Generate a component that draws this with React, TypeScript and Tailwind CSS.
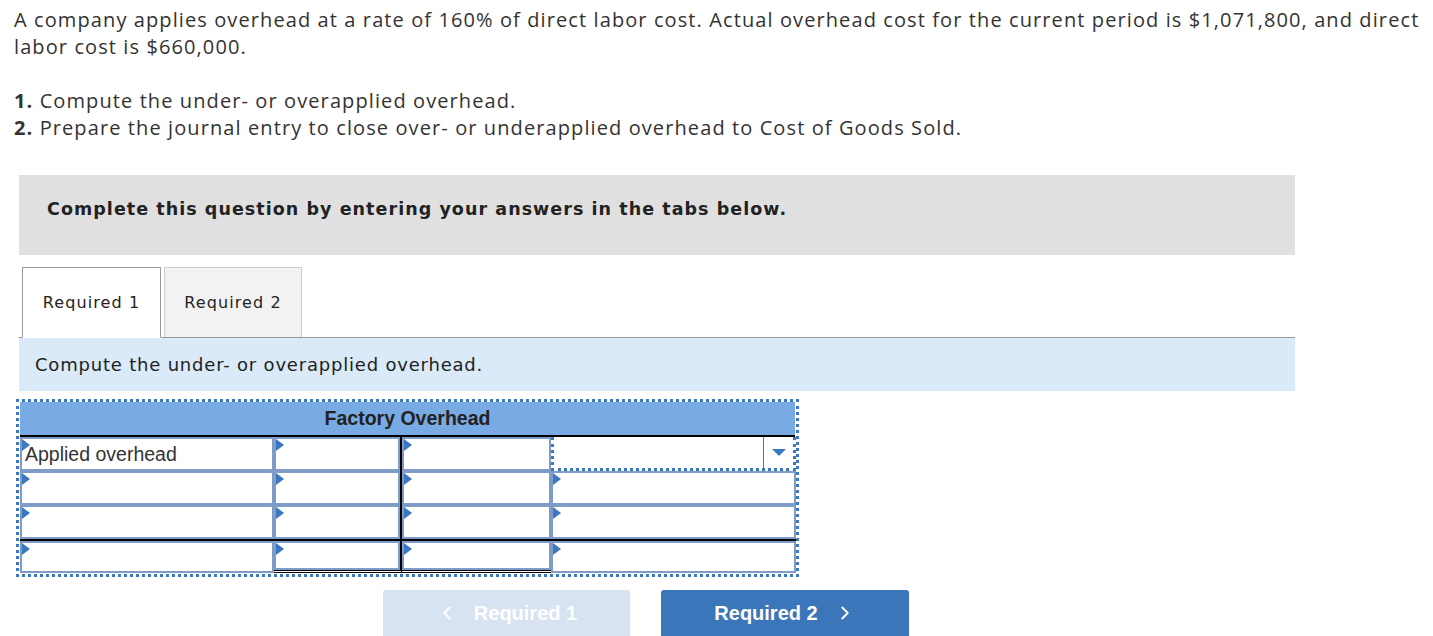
import { ChevronLeft, ChevronRight } from 'lucide-react'

function Flag() {
  return (
    <span className="absolute left-0 top-0 w-0 h-0 border-y-[6px] border-y-transparent border-l-[8px] border-l-[#3b78c0]" />
  )
}

function Cell({ text, className = '' }: { text?: string; className?: string }) {
  return (
    <div className={`relative h-full border-2 border-[#7f9cc8] bg-white ${className}`}>
      <Flag />
      {text && (
        <span className="absolute left-[3px] top-[2px] text-[19.5px] leading-[26px] text-[#333] font-['Liberation_Sans',sans-serif]">
          {text}
        </span>
      )}
    </div>
  )
}

const ROWS = [0, 1, 2, 3]

export default function App() {
  return (
    <div className="w-[1433px] h-[636px] overflow-hidden bg-white text-[#333] font-['Open_Sans',sans-serif]">
      {/* Aufgabentext */}
      <div className="pl-[14px] pt-[6px] text-[20px] leading-[27px] tracking-[1.1px]">
        <p>
          A company applies overhead at a rate of 160% of direct labor cost. Actual overhead cost for the current period is $1,071,800, and direct
          labor cost is $660,000.
        </p>
        <p className="mt-[27px]">
          <b>1.</b> Compute the under- or overapplied overhead.
        </p>
        <p>
          <b>2.</b> Prepare the journal entry to close over- or underapplied overhead to Cost of Goods Sold.
        </p>
      </div>

      {/* Hinweisbox */}
      <div className="ml-[19px] mt-[34px] w-[1276px] h-[80px] bg-[#e0e0e0] pt-[22px] pl-[28px] font-['DejaVu_Sans',sans-serif] font-bold text-[17.5px] leading-[24px] tracking-[1.05px] text-[#222]">
        Complete this question by entering your answers in the tabs below.
      </div>

      {/* Tabs */}
      <div className="ml-[19px] mt-[12px] w-[1276px] flex gap-[3px] pl-[3px] border-b border-[#999] font-['DejaVu_Sans',sans-serif] text-[16px] tracking-[1.1px] text-[#222]">
        <div className="w-[139px] h-[71px] -mb-px bg-white border border-[#999] border-b-white flex items-center justify-center">
          Required 1
        </div>
        <div className="w-[138px] h-[70px] bg-[#f2f2f2] border border-[#ccc] border-b-0 flex items-center justify-center">
          Required 2
        </div>
      </div>

      <div className="ml-[19px] w-[1276px] h-[53px] bg-[#daeaf8] flex items-center pl-[16px] font-['DejaVu_Sans',sans-serif] text-[18px] tracking-[0.8px] text-[#222]">
        Compute the under- or overapplied overhead.
      </div>

      {/* T-Konto */}
      <div className="ml-[16px] mt-[8px] w-[783px] border-[3px] border-dotted border-[#3b78c0] px-px pb-px">
        <div className="h-[35px] bg-[#78aae3] flex items-center justify-center font-['Liberation_Sans',sans-serif] font-bold text-[19.5px] text-[#222] border-b-2 border-black">
          Factory Overhead
        </div>
        <div className="grid grid-cols-[254px_128px_149px_245px]">
          {ROWS.map(r => (
            <div key={r} className="contents">
              <div className={`h-[34px] ${r === 3 ? 'border-t-2 border-black' : ''}`}>
                <Cell text={r === 0 ? 'Applied overhead' : undefined} />
              </div>
              <div className={`h-[34px] border-r-2 border-black ${r === 3 ? 'border-t-2 border-b-[3px] border-double' : ''}`}>
                <Cell />
              </div>
              <div className={`h-[34px] ${r === 3 ? 'border-t-2 border-b-[3px] border-double border-black' : ''}`}>
                <Cell />
              </div>
              <div className={`h-[34px] ${r === 3 ? 'border-t-2 border-black' : ''}`}>
                {r === 0 ? (
                  <div className="h-full bg-white border-[3px] border-dotted border-[#3b78c0] border-t-0 flex">
                    <div className="flex-1" />
                    <div className="w-[30px] border-l border-[#3b78c0] flex items-center justify-center">
                      <span className="w-0 h-0 border-x-[7px] border-x-transparent border-t-[7px] border-t-[#3b78c0]" />
                    </div>
                  </div>
                ) : (
                  <Cell />
                )}
              </div>
            </div>
          ))}
        </div>
      </div>

      {/* Navigation */}
      <div className="mt-[13px] flex gap-[31px] pl-[383px] font-['Liberation_Sans',sans-serif] font-bold text-[20px] text-white">
        <button className="w-[247px] h-[46px] rounded-t-[3px] bg-[#d7e3f1] flex items-center justify-center gap-[16px]">
          <ChevronLeft size={22} strokeWidth={2} />
          Required 1
        </button>
        <button className="w-[248px] h-[46px] rounded-t-[3px] bg-[#3a76b9] flex items-center justify-center gap-[16px]">
          Required 2
          <ChevronRight size={22} strokeWidth={2} />
        </button>
      </div>
    </div>
  )
}
